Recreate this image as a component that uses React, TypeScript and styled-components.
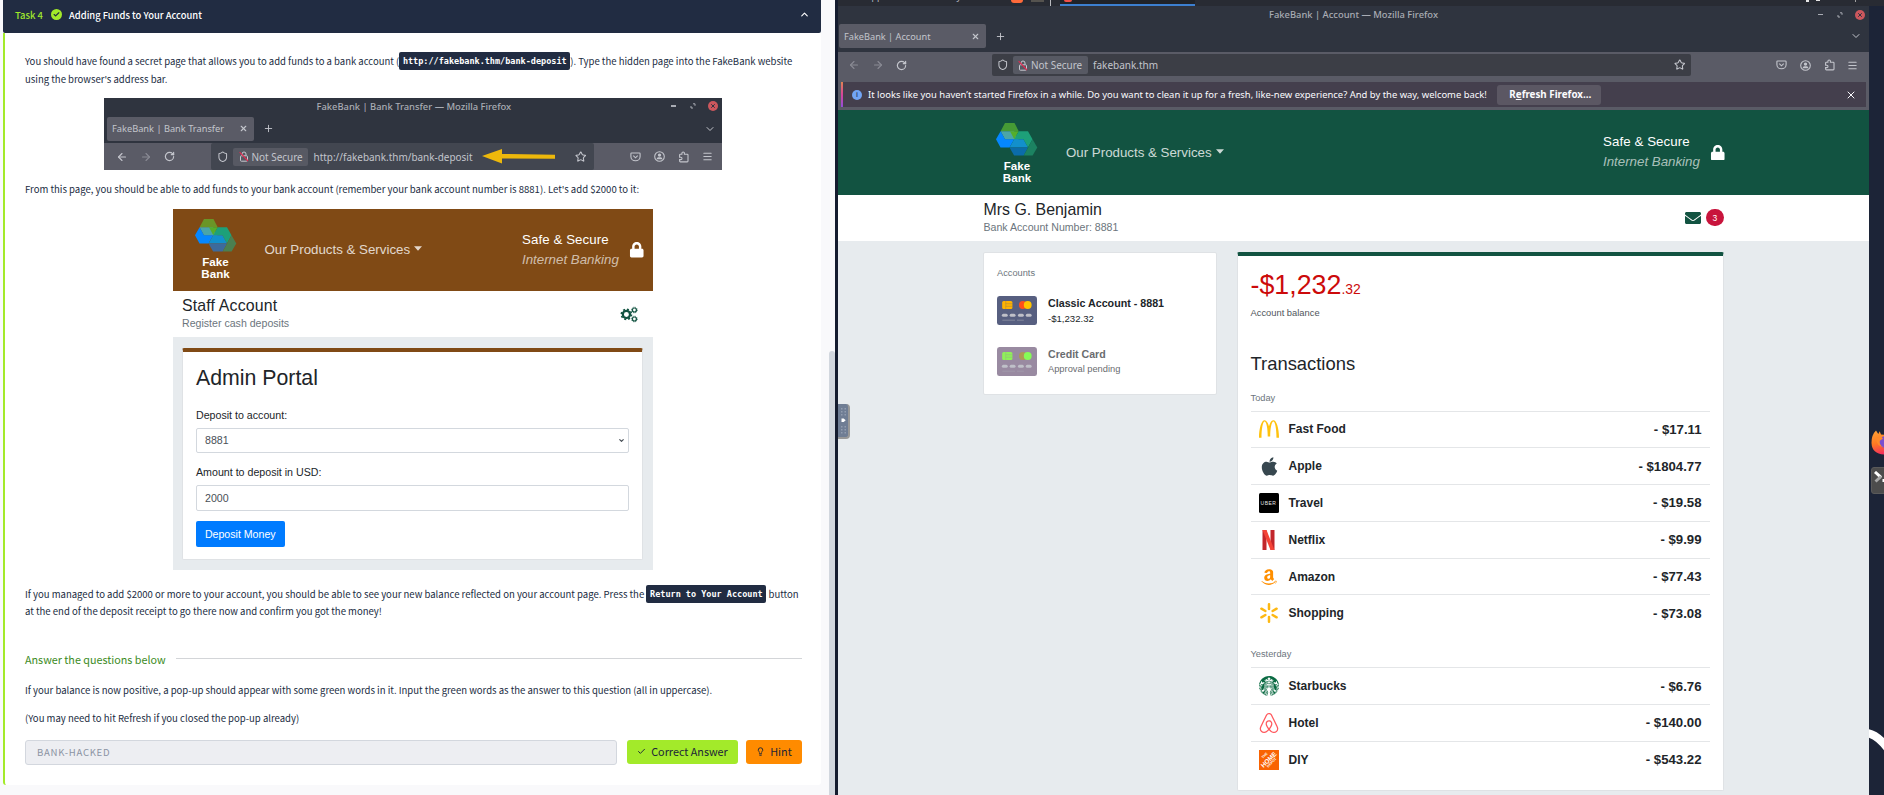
import React from "react";
import styled, { createGlobalStyle, css } from "styled-components";
import { ArrowLeft, ArrowRight, RotateCw, Shield, Star, Menu, X, Plus, ChevronDown, ChevronUp, Check, Lightbulb } from "lucide-react";
import { FaApple, FaAmazon, FaLock, FaEnvelope } from "react-icons/fa";
import { SiMcdonalds, SiStarbucks, SiAirbnb } from "react-icons/si";

const Global = createGlobalStyle`
  * { box-sizing: border-box; }
  html, body { margin: 0; padding: 0; overflow: hidden; background: #f9f9fb; }
  svg { display: block; flex: none; }
`;

const lesson = `"Noto Sans CJK SC", "Noto Sans", sans-serif`;
const mono = `"DejaVu Sans Mono", monospace`;
const ui = `"Noto Sans", sans-serif`;
const bankFont = `"Liberation Sans", Arial, sans-serif`;

/* ---------- text ---------- */
const Text = styled.span<{ $size: number; $color?: string; $bold?: boolean; $italic?: boolean; $ls?: number; $lh?: number; $weight?: number; $top?: number }>`
  display: block;
  white-space: nowrap;
  font-size: ${(p) => p.$size}px;
  color: ${(p) => p.$color ?? "inherit"};
  font-weight: ${(p) => p.$weight ?? (p.$bold ? 700 : 400)};
  font-style: ${(p) => (p.$italic ? "italic" : "normal")};
  letter-spacing: ${(p) => p.$ls ?? 0}px;
  line-height: ${(p) => (p.$lh ? `${p.$lh}px` : "normal")};
  margin-top: ${(p) => p.$top ?? 0}px;
`;

/* ---------- page ---------- */
const Page = styled.div`
  display: flex;
  width: 1884px;
  height: 795px;
  overflow: hidden;
  background: #f9f9fb;
`;
const LessonPane = styled.section`
  flex: none;
  width: 829px;
  padding-left: 3px;
  font-family: ${lesson};
  color: #212c42;
`;
const TaskHeader = styled.header`
  display: flex;
  align-items: center;
  width: 818px;
  height: 33px;
  padding: 0 11px 4px 12px;
  background: #212c42;
  border-radius: 0 0 2px 2px;
  color: #fff;
`;
const TaskLabel = styled.div`width: 36px; color: #9fe82c;`;
const Done = styled.div`
  display: grid;
  place-items: center;
  width: 11px;
  height: 11px;
  margin-right: 7px;
  border-radius: 50%;
  background: #a3ea2a;
  color: #212c42;
`;
const Spacer = styled.div`flex: 1;`;
const TaskBody = styled.div`
  display: flex;
  flex-direction: column;
  width: 818px;
  height: 752px;
  padding: 20px 19px 0 20px;
  background: #fff;
  border-left: 2px solid #a3ea2a;
  border-radius: 0 0 3px 3px;
`;
const Para = styled.div<{ $top?: number }>`margin-top: ${(p) => p.$top ?? 0}px;`;
const Line = styled.div`
  display: flex;
  align-items: center;
  height: 17px;
  padding-bottom: 1px;
  & + & { margin-top: 0.5px; }
`;
const Code = styled.code<{ $w: number }>`
  display: flex;
  justify-content: center;
  align-items: center;
  flex: none;
  width: ${(p) => p.$w}px;
  height: 18px;
  border-radius: 2px;
  background: #212c42;
  color: #fff;
  font-family: ${mono};
`;
const Figure = styled.div<{ $top: number; $left: number; $w: number; $h: number }>`
  display: flex;
  flex-direction: column;
  flex: none;
  width: ${(p) => p.$w}px;
  height: ${(p) => p.$h}px;
  margin: ${(p) => p.$top}px 0 0 ${(p) => p.$left}px;
  overflow: hidden;
`;
const Heading = styled.div`
  display: flex;
  align-items: center;
  gap: 10px;
  height: 18px;
  margin-top: 30px;
  padding-bottom: 1px;
  color: #3c8b24;
`;
const Rule = styled.div`flex: 1; height: 1px; background: #d3d5d8;`;
const AnswerRow = styled.div`display: flex; height: 25px; margin-top: 13px;`;
const AnswerBox = styled.div`
  display: flex;
  align-items: center;
  width: 592px;
  padding: 0 0 1px 11px;
  border: 1px solid #d3d7de;
  border-radius: 3px;
  background: #edeef2;
  color: #8b93a3;
`;
const Action = styled.div<{ $bg: string; $w: number; $ml: number }>`
  display: flex;
  align-items: center;
  justify-content: center;
  gap: 5px;
  width: ${(p) => p.$w}px;
  height: 24px;
  margin-left: ${(p) => p.$ml}px;
  padding-bottom: 2px;
  border-radius: 3px;
  background: ${(p) => p.$bg};
  color: #1c2538;
`;
const ScrollTrack = styled.div`
  flex: none;
  width: 6px;
  padding-top: 351px;
  background: #f9f9fb;
`;
const ScrollThumb = styled.div`height: 444px; border-radius: 3px 3px 0 0; background: #d2d7de;`;
const Divider = styled.div`position: relative; flex: none; width: 3px; background: #151c2f;`;
const Handle = styled.div`
  position: absolute;
  left: 3px;
  top: 404px;
  display: flex;
  justify-content: center;
  width: 12px;
  height: 35px;
  padding: 4px 0;
  border-radius: 0 4px 4px 0;
  background: #6f7d94;
  border-right: 2px solid #989898;
  border-bottom: 2px solid #989898;
`;

/* ---------- browser chrome ---------- */
const Bar = styled.div<{ $h: number; $bg: string; $pl?: number; $pb?: number; $pt?: number }>`
  display: flex;
  align-items: center;
  flex: none;
  height: ${(p) => p.$h}px;
  padding: ${(p) => p.$pt ?? 0}px 0 ${(p) => p.$pb ?? 0}px ${(p) => p.$pl ?? 0}px;
  background: ${(p) => p.$bg};
  font-family: ${ui};
  color: #c3c5cc;
`;
const Slot = styled.div<{ $w: number; $dim?: boolean }>`
  display: flex;
  align-items: center;
  justify-content: center;
  flex: none;
  width: ${(p) => p.$w}px;
  opacity: ${(p) => (p.$dim ? 0.45 : 1)};
`;
const TitleSlot = styled.div<{ $left: number }>`
  flex: 1;
  padding-left: ${(p) => p.$left}px;
`;
const CloseDot = styled.div`
  display: grid;
  place-items: center;
  width: 10px;
  height: 10px;
  border-radius: 50%;
  background: #cc575d;
  color: #2f343f;
`;
const Tab = styled.div`
  display: flex;
  align-items: center;
  justify-content: space-between;
  width: 147px;
  height: 24px;
  padding: 0 6px 0 5px;
  border-radius: 2px;
  background: #5a5b66;
`;
const UrlBar = styled.div<{ $w: number; $h: number; $bg: string }>`
  display: flex;
  align-items: center;
  flex: none;
  width: ${(p) => p.$w}px;
  height: ${(p) => p.$h}px;
  border-radius: 2px;
  background: ${(p) => p.$bg};
`;
const Badge = styled.div`
  display: flex;
  align-items: center;
  gap: 3px;
  width: 75px;
  height: 18px;
  margin-right: 5.5px;
  padding-left: 5.5px;
  border-radius: 2px;
  background: #575963;
`;

const Restore = () => (
  <svg width="6" height="6" viewBox="0 0 6 6" fill="none" stroke="#a9acb4" strokeWidth="1">
    <path d="M3 .8h2v2M3 5H1V3" />
  </svg>
);
const Minimise = styled.div`width: 5px; height: 1.5px; background: #a9acb4;`;
const InsecureLock = () => (
  <svg width="10" height="11" viewBox="0 0 10 11" fill="none" stroke="#c8c9d0" strokeWidth="1">
    <rect x="1.5" y="4.8" width="7" height="5.4" rx=".8" />
    <path d="M3 4.5V3a2 2 0 0 1 4 0v1.5" />
    <path d="M.6 1.2 9 10" stroke="#e22850" strokeWidth="1.1" />
  </svg>
);
const Pocket = () => (
  <svg width="11" height="10" viewBox="0 0 11 10" fill="none" stroke="currentColor" strokeWidth="1.1">
    <path d="M1.6 1h7.8q.7 0 .7.8v2.6a4.6 4.4 0 0 1-9.2 0V1.8Q.9 1 1.6 1Z" />
    <path d="m3.3 3.7 2.2 2.1 2.2-2.1" />
  </svg>
);
const Account = () => (
  <svg width="11" height="11" viewBox="0 0 11 11">
    <circle cx="5.5" cy="5.5" r="4.8" fill="none" stroke="currentColor" strokeWidth="1.1" />
    <circle cx="5.5" cy="4.1" r="1.7" fill="currentColor" />
    <path d="M2.6 8.2q0-1.9 1.8-1.9h2.2q1.8 0 1.8 1.9" fill="currentColor" />
  </svg>
);
const Extension = () => (
  <svg width="11" height="12" viewBox="0 0 11 12" fill="none" stroke="currentColor" strokeWidth="1.1">
    <path d="M3.9 3.3V2.2a1.2 1.2 0 0 1 2.5 0v1.1h2.8q.8 0 .8.8v6q0 .8-.8.8H2.4q-.8 0-.8-.8V8.6h1.2a1.2 1.2 0 0 0 0-2.4H1.6V4.1q0-.8.8-.8Z" />
  </svg>
);

const Tools = () => (
  <>
    <Slot $w={23.5}><Pocket /></Slot>
    <Slot $w={24}><Account /></Slot>
    <Slot $w={24}><Extension /></Slot>
    <Slot $w={23.5}><Menu size={11} strokeWidth={2.2} /></Slot>
  </>
);
const Controls = () => (
  <>
    <Slot $w={20}><Minimise /></Slot>
    <Slot $w={20}><Restore /></Slot>
    <Slot $w={19}><CloseDot><X size={6} strokeWidth={4} /></CloseDot></Slot>
  </>
);
const NavButtons = ({ dimBack }: { dimBack?: boolean }) => (
  <>
    <Slot $w={23.5} $dim={dimBack}><ArrowLeft size={12} strokeWidth={2.2} /></Slot>
    <Slot $w={24} $dim><ArrowRight size={12} strokeWidth={2.2} /></Slot>
    <Slot $w={24}><RotateCw size={11} strokeWidth={2.6} /></Slot>
  </>
);
const Site = () => (
  <>
    <Slot $w={20.5}><Shield size={11.5} strokeWidth={2.1} /></Slot>
    <Badge><InsecureLock /><Text $size={9.95}>Not Secure</Text></Badge>
  </>
);

/* ---------- bank ---------- */
const BankHeader = styled.div<{ $bg: string; $h: number; $pl: number }>`
  display: flex;
  align-items: center;
  flex: none;
  height: ${(p) => p.$h}px;
  padding-left: ${(p) => p.$pl}px;
  background: ${(p) => p.$bg};
  font-family: ${bankFont};
  color: #fff;
`;
const Brand = styled.div<{ $top: number }>`
  display: flex;
  flex-direction: column;
  align-items: center;
  width: 42px;
  margin-top: ${(p) => p.$top}px;
  text-align: center;
`;
const BrandName = styled.div`
  margin-top: 4.5px;
  font: 700 11.6px/12px ${bankFont};
`;
const Products = styled.div<{ $w: number; $pb: number }>`
  display: flex;
  align-items: center;
  gap: 4px;
  width: ${(p) => p.$w}px;
  margin-left: 28px;
  padding-bottom: ${(p) => p.$pb}px;
  opacity: 0.78;
`;
const Caret = () => (
  <svg width="8" height="7" viewBox="0 0 8 7">
    <path d="M0 .3h8L4 4.8Z" fill="#fff" />
  </svg>
);
const Safe = styled.div`
  width: 106.5px;
  line-height: 20px;
`;
const Identity = styled.div<{ $h: number; $pl: number }>`
  display: flex;
  align-items: center;
  flex: none;
  height: ${(p) => p.$h}px;
  padding-left: ${(p) => p.$pl}px;
  background: #fff;
  font-family: ${bankFont};
`;
const Hexes = ({ top, low, side }: { top: string; low: string; side: string }) => (
  <svg width="42" height="33" viewBox="0 0 42 33">
    <path d="M9 0h9.5l4.2 8.2H4.6Z" fill={top} />
    <path d="M4.6 8.2H18l4.6 8.2H9Z" fill="#4ba5a8" />
    <path d="M14 8.2h8.7l-4.4 8.1Z" fill="#54ae2b" />
    <path d="M4.6 8.2 9 16.3h9.2l-4.7 8.1h-9L0 16.3Z" fill="#0587ff" />
    <path d="M22.7 8.2H32l4.5 8.1-4.5 8.1-4.6-8.1h-9.1Z" fill="#1da079" />
    <path d="M18.2 16.3h9.2l4.6 8.1H13.5Z" fill="#1290cc" />
    <path d="M13.5 24.4h18.6l-4.4 8.1h-9.6Z" fill={low} />
    <path d="M36.5 16.3 41.3 24.4l-4.7 8.1h-8.9l4.4-8.1Z" fill={side} />
  </svg>
);
const Gear = ({ cx, cy, r }: { cx: number; cy: number; r: number }) => (
  <g fill="none" stroke="#125341">
    <circle cx={cx} cy={cy} r={r} strokeWidth={r * 0.62} />
    <circle cx={cx} cy={cy} r={r * 1.42} strokeWidth={r * 0.42} strokeDasharray={`${r * 0.557} ${r * 0.557}`} />
  </g>
);
const Gears = () => (
  <svg width="19" height="17" viewBox="0 0 19 17">
    <Gear cx={6.4} cy={8.4} r={3.6} />
    <Gear cx={14.4} cy={4} r={2} />
    <Gear cx={14.4} cy={13} r={2} />
  </svg>
);
const GrayArea = styled.div<{ $pad: string }>`
  display: flex;
  align-items: flex-start;
  flex: 1;
  padding: ${(p) => p.$pad};
  background: #e7ebee;
  font-family: ${bankFont};
  color: #212529;
`;
const Card = styled.div<{ $w: number; $h: number; $bar?: string; $pad: string; $ml?: number }>`
  flex: none;
  width: ${(p) => p.$w}px;
  height: ${(p) => p.$h}px;
  margin-left: ${(p) => p.$ml ?? 0}px;
  padding: ${(p) => p.$pad};
  border: 1px solid #dfe2e5;
  border-radius: 2px;
  background: #fff;
  ${(p) => p.$bar && css`border-top: 4px solid ${p.$bar};`}
`;
const Field = styled.div<{ $h: number }>`
  display: flex;
  align-items: center;
  justify-content: space-between;
  width: 433px;
  height: ${(p) => p.$h}px;
  margin-top: 6px;
  padding: 0 3px 0 8px;
  border: 1px solid #d3d8de;
  border-radius: 2px;
  color: #495057;
`;
const Primary = styled.div`
  display: grid;
  place-items: center;
  width: 88.5px;
  height: 26px;
  margin-top: 10px;
  border-radius: 2px;
  background: #007bff;
  color: #fff;
`;
const AccountRow = styled.div<{ $top: number; $faded?: boolean }>`
  display: flex;
  align-items: center;
  gap: 11px;
  height: 30px;
  margin-top: ${(p) => p.$top}px;
  color: ${(p) => (p.$faded ? "#6a6c6f" : "#212529")};
`;
const CardArt = ({ body, a, b, c }: { body: string; a: string; b: string; c: string }) => (
  <svg width="40" height="29" viewBox="0 0 41 29" preserveAspectRatio="none">
    <rect width="41" height="29" rx="2.5" fill={body} />
    <rect x="5.3" y="5" width="10.5" height="8" rx="1.5" fill={a} />
    <path d="M9 5v8M9 7.7h6.8M9 10.3h6.8" stroke={body} strokeOpacity=".35" strokeWidth=".8" />
    <circle cx="26.5" cy="9" r="4" fill={b} />
    <circle cx="31.5" cy="9" r="4" fill={c} />
    <g fill="#bfc0c8">
      <rect x="5" y="17.8" width="6" height="3" rx="1.5" />
      <rect x="13" y="17.8" width="6" height="3" rx="1.5" />
      <rect x="21.5" y="17.8" width="6" height="3" rx="1.5" />
      <rect x="29.5" y="17.8" width="6" height="3" rx="1.5" />
    </g>
    <path d="M5.5 24.2h13M20.5 24.2h7" stroke="#a9a9b5" strokeWidth=".9" opacity=".6" />
  </svg>
);
const Balance = styled.div`
  display: flex;
  align-items: baseline;
  height: 33px;
  margin-top: 1px;
  color: #cc0a0a;
`;
const Group = styled.div`margin-top: 6px;`;
const Row = styled.div`
  display: flex;
  align-items: center;
  height: 36.8px;
  padding: 0 8.5px 0 8px;
  border-top: 1px solid #e4e6e8;
`;
const RowIcon = styled.div`
  display: grid;
  place-items: center;
  width: 20px;
  height: 20px;
  margin-right: 10px;
`;
const UberTile = styled.div`
  display: grid;
  place-items: center;
  width: 20px;
  height: 20px;
  border-radius: 1.5px;
  background: #000;
  color: #e8e8e8;
  font: 400 5px/6px ${bankFont};
  letter-spacing: 0.5px;
`;
const DepotTile = styled.div`
  display: grid;
  place-items: center;
  width: 20px;
  height: 20px;
  background: #f96302;
  color: #fff;
`;
const DepotWords = styled.div`
  transform: rotate(-45deg);
  font: 900 3.5px/3.5px ${bankFont};
  text-align: center;
`;
const DepotHome = styled.div`font-size: 6.4px; line-height: 6px;`;
const Bubble = styled.div`
  display: grid;
  place-items: center;
  width: 17.5px;
  height: 17.5px;
  margin-left: 5px;
  border-radius: 50%;
  background: #c8143c;
  color: #fff;
`;

const NetflixMark = () => (
  <svg width="13" height="20" viewBox="0 0 13 20">
    <path d="M.5 0h4v20l-4 .2ZM8.5 0h4v20.2l-4-.2Z" fill="#c2262b" />
    <path d="M.5 0h4l8 20.2-4-.2Z" fill="#f44336" />
  </svg>
);
const Spark = () => (
  <svg width="20" height="20" viewBox="0 0 20 20" stroke="#fdb813" strokeWidth="2.5" strokeLinecap="round">
    <path d="M10 1.3v4.7M10 14v4.7M2.4 5.7l4 2.3M13.6 12l4 2.3M2.4 14.3l4-2.3M13.6 8l4-2.3" />
  </svg>
);

/* ---------- right window ---------- */
const WindowPane = styled.section`display: flex; flex-direction: column; flex: none; width: 1031px; background: #e7ebee;`;
const Panel = styled.div`
  display: flex;
  align-items: flex-end;
  flex: none;
  height: 6px;
  overflow: hidden;
  background: #282b33;
  font-family: ${ui};
  color: #b9bbc0;
`;
const PanelText = styled.div`
  flex: none;
  width: 145px;
  margin-left: 28px;
  margin-bottom: 2.5px;
  font-size: 8.8px;
  line-height: 14px;
  white-space: nowrap;
`;
const PanelMark = styled.div<{ $ml: number; $w: number; $h: number; $c: string; $round?: boolean }>`
  flex: none;
  width: ${(p) => p.$w}px;
  height: ${(p) => p.$h}px;
  margin-left: ${(p) => p.$ml}px;
  align-self: flex-start;
  border-radius: ${(p) => (p.$round ? "0 0 8px 8px" : "0")};
  background: ${(p) => p.$c};
`;
const TaskItem = styled.div`
  display: flex;
  flex: none;
  width: 135px;
  height: 6px;
  margin-left: 9px;
  border-bottom: 2px solid #3c7fd0;
  background: #202329;
`;
const Notice = styled.div`
  display: flex;
  align-items: center;
  width: 1025px;
  height: 25px;
  padding-left: 9px;
  border-left: 2px solid;
  border-image: linear-gradient(#e0884a, #d8449a, #8a4fe0) 1;
  background: #443f4d;
  color: #fbfbfe;
`;
const Info = styled.div`
  display: grid;
  place-items: center;
  width: 10px;
  height: 10px;
  margin-right: 6px;
  border-radius: 50%;
  background: #72a5f5;
  color: #2d4570;
  font: 700 7px/10px ${bankFont};
`;
const Refresh = styled.div`
  display: grid;
  place-items: center;
  width: 104px;
  height: 20px;
  margin-left: 10.5px;
  padding-left: 2px;
  border-radius: 3px;
  background: #5b5763;
`;
const Desktop = styled.aside`
  display: flex;
  flex-direction: column;
  flex: none;
  width: 15px;
  padding-left: 2px;
  overflow: hidden;
  background: #1c2437;
`;
const Dock = styled.div`flex: none; width: 20px; height: 6px; margin-left: -2px; background: #282b33;`;
const Fox = styled.div`flex: none; margin-top: 423px;`;
const FoxIcon = () => (
  <svg width="28" height="27" viewBox="0 0 28 27">
    <defs>
      <linearGradient id="fox" x1="0" y1="0" x2=".3" y2="1">
        <stop offset="0" stopColor="#ffa436" />
        <stop offset=".55" stopColor="#ff7a22" />
        <stop offset="1" stopColor="#f5305c" />
      </linearGradient>
    </defs>
    <path d="M5 1.5 7.3 5l1.4-2.7L10 5.5q4 0 7 2l9 6q0 12-12.5 12Q1 25 .5 14 .4 6 5 1.5Z" fill="url(#fox)" />
    <circle cx="14.5" cy="13" r="6" fill="#7a4fd0" />
    <path d="M5 9q5-3 7 .6L8.5 12q-.5 4 4 6-7-.5-7.5-9Z" fill="#ff8a2a" />
  </svg>
);
const Terminal = styled.div`
  flex: none;
  width: 28px;
  height: 27px;
  margin-top: 11px;
  padding: 3px 2px;
  border: 1px solid #5a5a5a;
  border-radius: 3px;
  background: #4c4c4c;
`;
const Arc = styled.div`margin: 231px 0 0 -2px;`;

const CHAR = "#212529";
type Tx = [React.ReactNode, string, string];
const today: Tx[] = [
  [<SiMcdonalds size={20} color="#ffc20e" />, "Fast Food", "- $17.11"],
  [<FaApple size={21} color="#37474f" />, "Apple", "- $1804.77"],
  [<UberTile>UBER</UberTile>, "Travel", "- $19.58"],
  [<NetflixMark />, "Netflix", "- $9.99"],
  [<FaAmazon size={18} color="#ff8f00" />, "Amazon", "- $77.43"],
  [<Spark />, "Shopping", "- $73.08"],
];
const yesterday: Tx[] = [
  [<SiStarbucks size={20} color="#0b6b43" />, "Starbucks", "- $6.76"],
  [<SiAirbnb size={20} color="#ff5a5f" />, "Hotel", "- $140.00"],
  [<DepotTile><DepotWords>THE<DepotHome>HOME</DepotHome>DEPOT</DepotWords></DepotTile>, "DIY", "- $543.22"],
];

const Rows = ({ items }: { items: Tx[] }) => (
  <>
    {items.map(([icon, name, amount]) => (
      <Row key={name}>
        <RowIcon>{icon}</RowIcon>
        <Text $size={12} $bold>{name}</Text>
        <Spacer />
        <Text $size={13.2} $bold>{amount}</Text>
      </Row>
    ))}
  </>
);

const BankTop = ({ brown }: { brown?: boolean }) => (
  <BankHeader $bg={brown ? "#804a15" : "#125341"} $h={brown ? 82 : 84.5} $pl={brown ? 21.5 : 158}>
    <Brand $top={brown ? -1 : 2}>
      {brown ? <Hexes top="#6a9527" low="#3d6a9b" side="#4b7f50" /> : <Hexes top="#469a35" low="#0b6ca9" side="#1c8261" />}
      <BrandName>Fake<br />Bank</BrandName>
    </Brand>
    <Products $w={brown ? 257.5 : 537} $pb={brown ? 2 : 0}>
      <Text $size={13.3}>Our Products &amp; Services</Text>
      <Caret />
    </Products>
    <Safe>
      <Text $size={13.3} $lh={20} $ls={0.08}>Safe &amp; Secure</Text>
      <Text $size={13.3} $lh={20} $italic $color="rgba(255,255,255,.65)">Internet Banking</Text>
    </Safe>
    <FaLock size={15.5} />
  </BankHeader>
);

const BrowserShot = () => (
  <Figure $top={10} $left={79} $w={618} $h={72}>
    <Bar $h={16} $bg="#2f343f" $pt={1}>
      <TitleSlot $left={212.5}><Text $size={9.4} $weight={500} $color="#a9acb4">FakeBank | Bank Transfer — Mozilla Firefox</Text></TitleSlot>
      <Controls />
    </Bar>
    <Bar $h={29} $bg="#2f343f" $pl={3} $pt={1}>
      <Tab><Text $size={9.25}>FakeBank | Bank Transfer</Text><X size={9} strokeWidth={3} /></Tab>
      <Slot $w={29}><Plus size={11} strokeWidth={2} /></Slot>
      <Spacer />
      <Slot $w={24}><ChevronDown size={12} strokeWidth={2} /></Slot>
    </Bar>
    <Bar $h={27} $bg="#5a5b66" $pl={6} $pt={1}>
      <NavButtons dimBack={false} />
      <Slot $w={29.5} />
      <UrlBar $w={382.5} $h={27} $bg="#424650">
        <Slot $w={1.5} />
        <Site />
        <Text $size={9.95}>http://fakebank.thm/bank-deposit</Text>
        <Spacer />
        <svg width="73" height="15" viewBox="0 0 73 15">
          <path d="M0 7 20 0v5l53 .8v4L20 9.5v5Z" fill="#edb80b" />
        </svg>
        <Slot $w={15} />
        <Slot $w={23}><Star size={11.5} strokeWidth={2.2} /></Slot>
        <Slot $w={1} />
      </UrlBar>
      <Spacer />
      <Tools />
      <Slot $w={3} />
    </Bar>
  </Figure>
);

const Portal = () => (
  <Figure $top={11} $left={148} $w={480} $h={361}>
    <BankTop brown />
    <Identity $h={46} $pl={9}>
      <div>
        <Text $size={15.9} $color={CHAR} $lh={18} $ls={0.15}>Staff Account</Text>
        <Text $size={10.6} $color="#6c757d" $lh={16}>Register cash deposits</Text>
      </div>
      <Spacer />
      <Gears />
      <Slot $w={14} />
    </Identity>
    <GrayArea $pad="11px 9px 10px 9px">
      <Card $w={461} $h={212} $bar="#804a15" $pad="11px 0 0 13px">
        <Text $size={21.3} $lh={30}>Admin Portal</Text>
        <Text $size={10.65} $lh={14} $top={14.5}>Deposit to account:</Text>
        <Field $h={25}><Text $size={10.65}>8881</Text><ChevronDown size={7} strokeWidth={4} /></Field>
        <Text $size={10.65} $lh={14} $top={12}>Amount to deposit in USD:</Text>
        <Field $h={26}><Text $size={10.65}>2000</Text></Field>
        <Primary><Text $size={10.6}>Deposit Money</Text></Primary>
      </Card>
    </GrayArea>
  </Figure>
);

export default function App() {
  return (
    <Page>
      <Global />
      <LessonPane>
        <TaskHeader>
          <TaskLabel><Text $size={9.45} $weight={500} $lh={16}>Task 4</Text></TaskLabel>
          <Done><Check size={7} strokeWidth={4} /></Done>
          <Text $size={9.4} $weight={500} $lh={16}>Adding Funds to Your Account</Text>
          <Spacer />
          <ChevronUp size={11} strokeWidth={2.5} />
        </TaskHeader>
        <TaskBody>
          <Para>
            <Line>
              <Text $size={9.53}>You should have found a secret page that allows you to add funds to a bank account (</Text>
              <Code $w={171}><Text $size={8.5} $bold>http://fakebank.thm/bank-deposit</Text></Code>
              <Text $size={9.53}>). Type the hidden page into the FakeBank website</Text>
            </Line>
            <Line><Text $size={9.55}>using the browser's address bar.</Text></Line>
          </Para>
          <BrowserShot />
          <Para $top={11.5}>
            <Line><Text $size={9.55}>From this page, you should be able to add funds to your bank account (remember your bank account number is 8881). Let's add $2000 to it:</Text></Line>
          </Para>
          <Portal />
          <Para $top={15.5}>
            <Line>
              <Text $size={9.55}>If you managed to add $2000 or more to your account, you should be able to see your new balance reflected on your account page. Press the&nbsp;</Text>
              <Code $w={120}><Text $size={8.5} $bold>Return to Your Account</Text></Code>
              <Text $size={9.55}>&nbsp;button</Text>
            </Line>
            <Line><Text $size={9.55}>at the end of the deposit receipt to go there now and confirm you got the money!</Text></Line>
          </Para>
          <Heading><Text $size={10.78}>Answer the questions below</Text><Rule /></Heading>
          <Para $top={14}>
            <Line><Text $size={9.55}>If your balance is now positive, a pop-up should appear with some green words in it. Input the green words as the answer to this question (all in uppercase).</Text></Line>
          </Para>
          <Para $top={11}><Line><Text $size={9.55}>(You may need to hit Refresh if you closed the pop-up already)</Text></Line></Para>
          <AnswerRow>
            <AnswerBox><Text $size={9.6} $ls={0.7}>BANK-HACKED</Text></AnswerBox>
            <Action $bg="#a3ea2a" $w={111} $ml={10}><Check size={9} strokeWidth={2.5} /><Text $size={10.8}>Correct Answer</Text></Action>
            <Action $bg="#ff8b00" $w={56} $ml={8}><Lightbulb size={9} strokeWidth={2.5} /><Text $size={10.8}>Hint</Text></Action>
          </AnswerRow>
        </TaskBody>
      </LessonPane>
      <ScrollTrack><ScrollThumb /></ScrollTrack>
      <Divider>
        <Handle>
          <svg width="7" height="27" viewBox="0 0 7 27" fill="#929db0">
            {[0, 3, 6, 18, 21, 24].map((y) => (
              <React.Fragment key={y}>
                <rect x="1" y={y} width="1.5" height="1.5" />
                <rect x="4.5" y={y} width="1.5" height="1.5" />
              </React.Fragment>
            ))}
            <path d="M1.5 10.5h2.2l2 1.7-2 1.8H1.5Z" fill="#fff" />
          </svg>
        </Handle>
      </Divider>
      <WindowPane>
        <Panel>
          <PanelText>Applications&nbsp; Places&nbsp; System</PanelText>
          <PanelMark $ml={0} $w={12} $h={3} $c="#ff6a3a" $round />
          <PanelMark $ml={8} $w={13} $h={2} $c="#55534f" />
          <PanelMark $ml={6} $w={1} $h={6} $c="#b9bbc0" />
          <TaskItem><PanelMark $ml={4} $w={8} $h={2} $c="#f0504a" $round /></TaskItem>
          <PanelMark $ml={611} $w={3} $h={2} $c="#e6e6e6" />
          <PanelMark $ml={7} $w={4} $h={1} $c="#e6e6e6" />
          <PanelMark $ml={35} $w={1} $h={2} $c="#a0a0a0" />
        </Panel>
        <Bar $h={16} $bg="#2f343f" $pt={1}>
          <TitleSlot $left={431}><Text $size={9.4} $weight={500} $color="#a9acb4">FakeBank | Account — Mozilla Firefox</Text></TitleSlot>
          <Controls />
        </Bar>
        <Bar $h={30} $bg="#2f343f" $pl={1} $pb={2}>
          <Tab><Text $size={9.2}>FakeBank | Account</Text><X size={9} strokeWidth={3} /></Tab>
          <Slot $w={29}><Plus size={11} strokeWidth={2} /></Slot>
          <Spacer />
          <Slot $w={26}><ChevronDown size={12} strokeWidth={2} /></Slot>
        </Bar>
        <Bar $h={29} $bg="#5a5b66" $pl={4} $pb={3}>
          <NavButtons dimBack />
          <Slot $w={78.5} />
          <UrlBar $w={698.5} $h={22} $bg="#3c3e46">
            <Site />
            <Text $size={10}>fakebank.thm</Text>
            <Spacer />
            <Slot $w={22}><Star size={11.5} strokeWidth={2.2} /></Slot>
          </UrlBar>
          <Spacer />
          <Tools />
          <Slot $w={4.5} />
        </Bar>
        <Bar $h={29} $bg="#5a5b66" $pl={3} $pb={2}>
          <Notice>
            <Info>i</Info>
            <Text $size={9.44}>It looks like you haven’t started Firefox in a while. Do you want to clean it up for a fresh, like-new experience? And by the way, welcome back!</Text>
            <Refresh><Text $size={9.8} $bold>R<u>e</u>fresh Firefox…</Text></Refresh>
            <Spacer />
            <X size={12} strokeWidth={2} />
            <Slot $w={9} />
          </Notice>
        </Bar>
        <BankTop />
        <Identity $h={46} $pl={145.5}>
          <div>
            <Text $size={15.9} $color={CHAR} $lh={19}>Mrs G. Benjamin</Text>
            <Text $size={10.6} $color="#6c757d" $lh={16}>Bank Account Number: 8881</Text>
          </div>
          <Spacer />
          <FaEnvelope size={16} color="#125341" />
          <Bubble><Text $size={8.5}>3</Text></Bubble>
          <Slot $w={145.5} />
        </Identity>
        <GrayArea $pad="11px 0 0 145px">
          <Card $w={234} $h={143.5} $pad="13px 0 0 13px">
            <Text $size={9.25} $color="#6c757d" $lh={14}>Accounts</Text>
            <AccountRow $top={16}>
              <CardArt body="#575f80" a="#ffb300" b="#ff4f1a" c="#ffc400" />
              <div>
                <Text $size={10.7} $bold $lh={15}>Classic Account - 8881</Text>
                <Text $size={9.6} $lh={15}>-$1,232.32</Text>
              </div>
            </AccountRow>
            <AccountRow $top={21} $faded>
              <CardArt body="#998aa1" a="#8ff05a" b="#ad9a55" c="#86fb57" />
              <div>
                <Text $size={10.6} $bold $lh={15}>Credit Card</Text>
                <Text $size={9.3} $lh={15}>Approval pending</Text>
              </div>
            </AccountRow>
          </Card>
          <Card $w={487} $h={539.5} $bar="#125341" $pad="13px 12.5px 0 13px" $ml={19.5}>
            <Balance><Text $size={26.8}>-$1,232</Text><Text $size={13.9}>.32</Text></Balance>
            <Text $size={9.35} $color="#50565c" $lh={14} $top={3}>Account balance</Text>
            <Text $size={18.4} $lh={24} $top={32}>Transactions</Text>
            <Text $size={9.25} $color="#6c757d" $lh={14} $top={15}>Today</Text>
            <Group><Rows items={today} /></Group>
            <Text $size={9.25} $color="#6c757d" $lh={14} $top={16}>Yesterday</Text>
            <Group><Rows items={yesterday} /></Group>
          </Card>
        </GrayArea>
      </WindowPane>
      <Desktop>
        <Dock />
        <Fox><FoxIcon /></Fox>
        <Terminal>
          <svg width="16" height="14" viewBox="0 0 16 14" fill="none" strokeWidth="3">
            <path d="M1 1 7 6.3" stroke="#fff" />
            <path d="M7 5.5 1.5 10.5" stroke="#a8a8a8" />
            <path d="M8.5 9.5h6" stroke="#fff" />
          </svg>
        </Terminal>
        <Arc>
          <svg width="18" height="40" viewBox="0 0 18 40" fill="none" stroke="#fff" strokeWidth="8">
            <path d="M-2 8Q9 10 19 24" />
          </svg>
        </Arc>
      </Desktop>
    </Page>
  );
}
